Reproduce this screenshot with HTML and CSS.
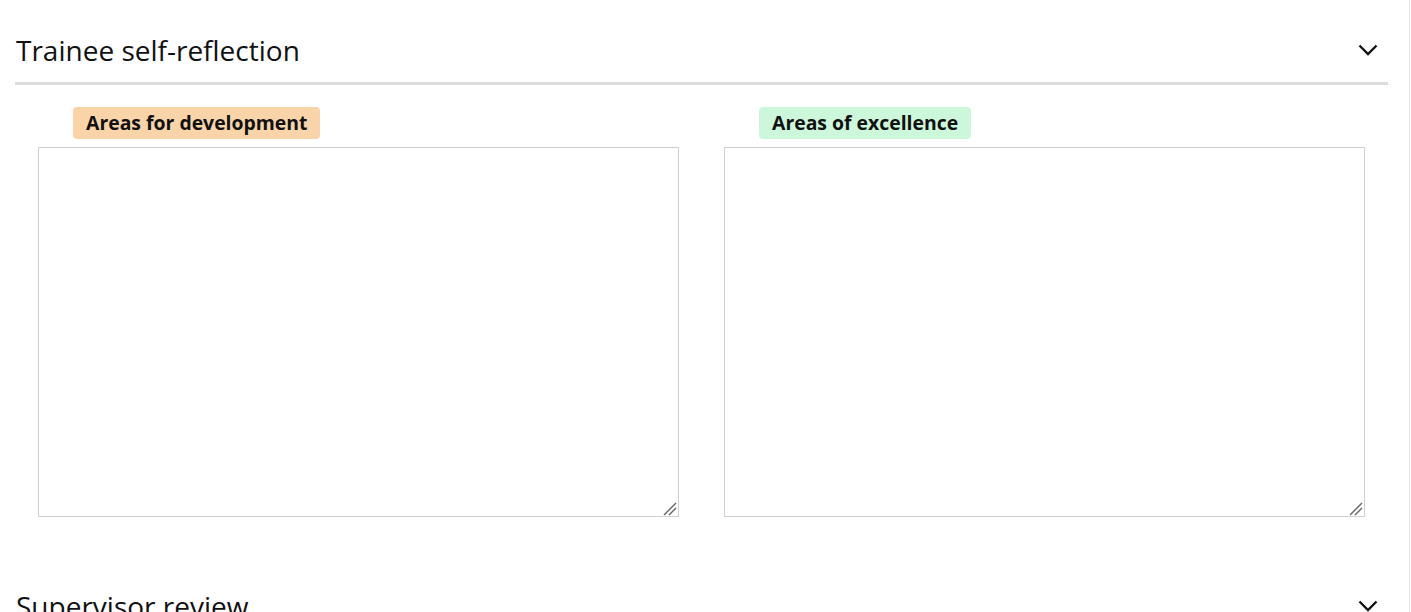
FILE: index.html
```html
<!DOCTYPE html>
<html>
<head>
<meta charset="utf-8">
<link rel="stylesheet" href="styles.css">
</head>
<body>
<div class="page">
  <section class="section">
    <div class="section-header">
      <h2 class="section-title">Trainee self-reflection</h2>
      <svg class="chevron" width="20" height="12" viewBox="0 0 20 12"><polyline points="1.5,1.5 10,10 18.5,1.5" fill="none" stroke="#111" stroke-width="2.3"/></svg>
    </div>
    <div class="fields">
      <div class="field">
        <span class="pill pill-dev">Areas for development</span>
        <div class="box-wrap">
          <textarea class="box"></textarea>
          <svg class="grip" width="14" height="14" viewBox="0 0 14 14"><line x1="1" y1="13" x2="13" y2="1" stroke="#666" stroke-width="1.4"/><line x1="6" y1="13" x2="13" y2="6" stroke="#666" stroke-width="1.4"/></svg>
        </div>
      </div>
      <div class="field">
        <span class="pill pill-exc">Areas of excellence</span>
        <div class="box-wrap">
          <textarea class="box"></textarea>
          <svg class="grip" width="14" height="14" viewBox="0 0 14 14"><line x1="1" y1="13" x2="13" y2="1" stroke="#666" stroke-width="1.4"/><line x1="6" y1="13" x2="13" y2="6" stroke="#666" stroke-width="1.4"/></svg>
        </div>
      </div>
    </div>
  </section>
  <section class="section">
    <div class="section-header">
      <h2 class="section-title">Supervisor review</h2>
      <svg class="chevron" width="20" height="12" viewBox="0 0 20 12"><polyline points="1.5,1.5 10,10 18.5,1.5" fill="none" stroke="#111" stroke-width="2.3"/></svg>
    </div>
  </section>
</div>
</body>
</html>
```
FILE: styles.css
```css
html, body {
  margin: 0;
  padding: 0;
  background: #fff;
  overflow: hidden;
}
body {
  font-family: "Open Sans", "Liberation Sans", sans-serif;
  color: #111;
}
.page {
  width: 1410px;
  height: 612px;
  border-right: 1px solid #e4e4e4;
  box-sizing: border-box;
  padding: 0 21px 0 15px;
}
.section {
  padding-bottom: 39px;
}
.section-header {
  display: flex;
  align-items: center;
  justify-content: space-between;
  padding: 32px 10px 14px 1px;
  border-bottom: 3px solid #dcdcdc;
}
.section-title {
  margin: 0;
  font-size: 28px;
  font-weight: 500;
  line-height: 36px;
  color: #111;
}
.chevron {
  display: block;
}
.fields {
  display: grid;
  grid-template-columns: 1fr 1fr;
  column-gap: 45px;
  padding: 22px 23px 0;
}
.field {
  display: flex;
  flex-direction: column;
  align-items: flex-start;
}
.pill {
  margin-left: 35px;
  height: 32px;
  line-height: 32px;
  padding: 0 13px;
  border-radius: 4px;
  font-size: 19.4px;
  font-weight: 700;
  color: #111;
}
.pill-dev { background: #f9d4a9; }
.pill-exc { background: #cdf7da; }
.box-wrap {
  position: relative;
  margin-top: 8px;
  width: 100%;
  height: 370px;
}
.box {
  display: block;
  width: 100%;
  height: 100%;
  box-sizing: border-box;
  border: 1px solid #d0d0d0;
  border-radius: 0;
  resize: none;
  outline: none;
  font-family: inherit;
}
.grip {
  position: absolute;
  right: 2px;
  bottom: 1px;
}
```
